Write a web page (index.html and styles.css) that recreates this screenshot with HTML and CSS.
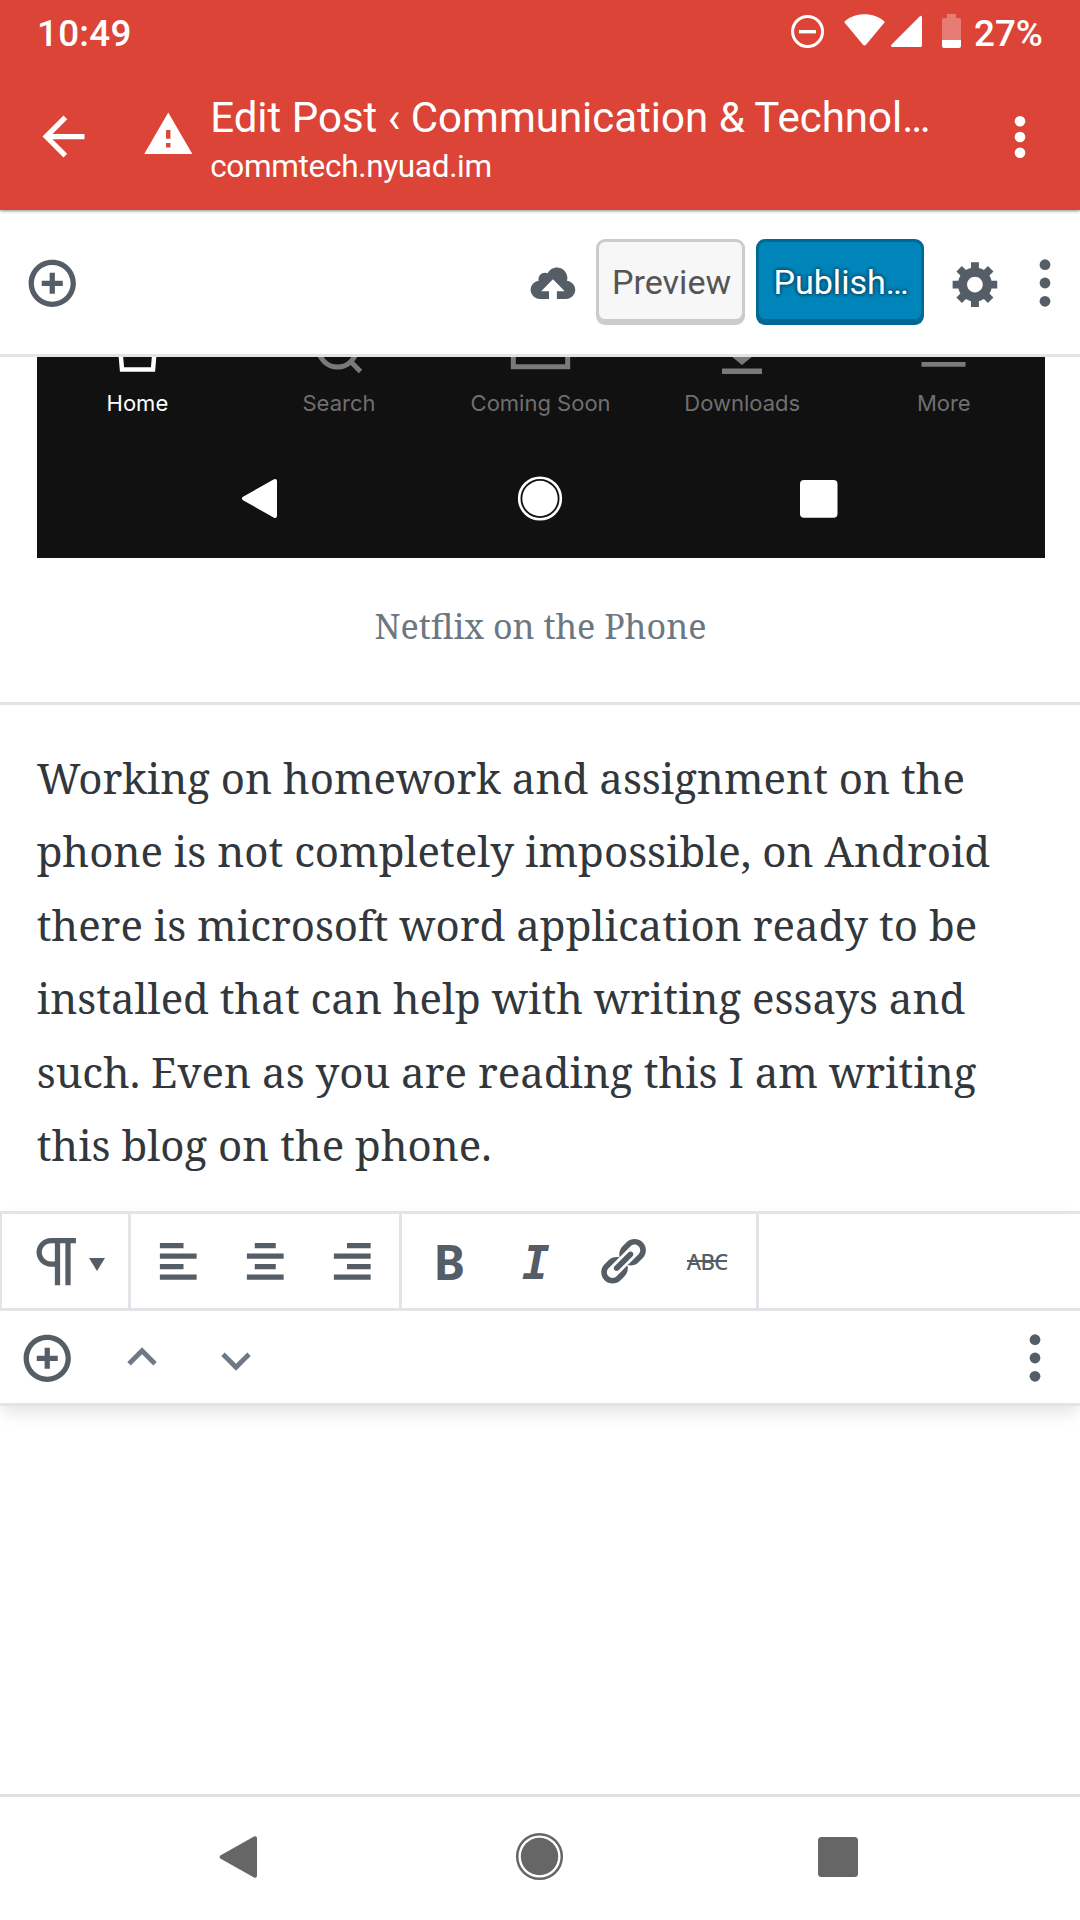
FILE: index.html
```html
<!DOCTYPE html>
<html lang="en">
<head>
<meta charset="utf-8">
<title>Edit Post ‹ Communication &amp; Technology</title>
<link rel="stylesheet" href="styles.css">
</head>
<body>
<div class="screen">
  <header class="chrome">
    <div class="status">
      <span class="status-text">10:49</span>
      <svg class="status-icons" width="176" height="63" viewBox="790 0 176 63">
        <circle cx="807.6" cy="31.5" r="15" fill="none" stroke="#fff" stroke-width="3"/>
        <path d="M799 30h17v3.400h-17z" fill="#fff"/>
        <path d="M864.5 14.3c-7.600 0-14.300 2.500-19.400 6.600-.7.6-.8 1.500-.2 2.200l18.100 21.700c.8 1 2.200 1 3 0l18.100-21.700c.6-.7.5-1.600-.2-2.200-5.100-4.100-11.800-6.600-19.400-6.600z" fill="#fff"/>
        <path d="M922 17.200v28.200q0 1.600-1.600 1.600h-28q-2.400-.6-.8-2.600l28-28q1.800-1.400 2.400.8z" fill="#fff"/>
        <path d="M947 14h9v4h3q2 0 2 2v20h-19V20q0-2 2-2h3z" fill="#fff" opacity=".3"/>
        <path d="M942 40h19v6q0 2-2 2h-15q-2 0-2-2z" fill="#fff"/>
      </svg>
      <span class="status-text">27%</span>
    </div>
    <div class="appbar">
      <svg class="back" width="63" height="63" viewBox="0 0 24 24"><path d="M20 11H7.830l5.590-5.590L12 4l-8 8 8 8 1.410-1.410L7.830 13H20z"/></svg>
      <svg class="warn" width="52.5" height="52.5" viewBox="0 0 24 24"><path d="M1 21h22L12 2 1 21zm12-3h-2v-2h2v2zm0-4h-2v-4h2v4z"/></svg>
      <div class="page">
        <div class="page-title">Edit Post ‹ Communication &amp; Technol…</div>
        <div class="page-host">commtech.nyuad.im</div>
      </div>
      <svg class="menu" width="12" height="44" viewBox="0 0 12 44"><circle cx="6" cy="6.250" r="5.300"/><circle cx="6" cy="22" r="5.300"/><circle cx="6" cy="37.750" r="5.300"/></svg>
    </div>
  </header>

  <nav class="editor-bar">
    <svg class="add" width="52.5" height="52.5" viewBox="0 0 20 20"><path d="M10 1c-5 0-9 4-9 9s4 9 9 9 9-4 9-9-4-9-9-9zm0 16c-3.900 0-7-3.100-7-7s3.100-7 7-7 7 3.100 7 7-3.100 7-7 7zm1-11H9v3H6v2h3v3h2v-3h3V9h-3V6z"/></svg>
    <svg class="cloud" width="52.5" height="52.5" viewBox="0 0 20 20"><path d="M14.800 9c.1-.3.2-.6.2-1 0-2.200-1.800-4-4-4-1.500 0-2.900.9-3.500 2.200-.3-.1-.7-.2-1-.2C5.100 6 4 7.100 4 8.500c0 .2 0 .4.1.5-1.800.3-3.100 1.700-3.100 3.500C1 14.400 2.600 16 4.500 16H8v-3H5l4.500-4.500L14 13h-3v3h3.500c1.900 0 3.500-1.600 3.500-3.500 0-1.800-1.400-3.300-3.200-3.500z"/></svg>
    <button class="btn preview">Preview</button>
    <button class="btn publish">Publish…</button>
    <svg class="gear" width="52.5" height="52.5" viewBox="0 0 20 20"><path d="M18 12h-2.180c-.17.7-.44 1.350-.81 1.930l1.540 1.540-2.100 2.100-1.540-1.540c-.58.36-1.230.63-1.910.79V19H8v-2.180c-.68-.16-1.330-.43-1.910-.79l-1.540 1.540-2.120-2.120 1.540-1.540c-.36-.58-.63-1.230-.79-1.910H1V9.030h2.170c.16-.7.44-1.350.8-1.940L2.430 5.550l2.100-2.100 1.540 1.540c.58-.37 1.240-.64 1.930-.81V2h3v2.180c.68.16 1.330.43 1.910.79l1.540-1.540 2.120 2.120-1.540 1.540c.36.59.64 1.240.8 1.940H18V12zm-8.500 1.500c1.660 0 3-1.340 3-3s-1.340-3-3-3-3 1.340-3 3 1.340 3 3 3z"/></svg>
    <svg class="more" width="12" height="50" viewBox="0 0 12 50"><circle cx="6" cy="6.700" r="5.400"/><circle cx="6" cy="25" r="5.400"/><circle cx="6" cy="43.300" r="5.400"/></svg>
  </nav>

  <figure class="figure">
    <div class="shot">
      <svg class="shot-icons" width="1008" height="30" viewBox="37 357 1008 30" fill="none">
        <path d="M120.500 352l1.500 17.500h31l1.500-17.500" stroke="#fff" stroke-width="4.500"/>
        <g stroke="#7a7a7a" stroke-width="5">
          <circle cx="337.500" cy="348" r="19"/>
          <path d="M350.500 361.500l10 10"/>
          <path d="M513.300 350v16.700h54.400V350"/>
        </g>
        <path d="M725 351l17 14 17-14zM722 368.500h40v5.500h-40zM921.500 362h44v4.700h-44z" fill="#7a7a7a"/>
      </svg>
      <div class="tabs">
        <span class="tab active">Home</span><span class="tab">Search</span><span class="tab">Coming Soon</span><span class="tab">Downloads</span><span class="tab">More</span>
      </div>
      <svg class="shot-nav" width="1008" height="140" viewBox="37 417 1008 140">
        <path d="M244 498.500l31-17.500v35z" fill="#fff" stroke="#fff" stroke-width="4" stroke-linejoin="round"/>
        <circle cx="540" cy="498.500" r="20.800" fill="none" stroke="#fff" stroke-width="2.600"/>
        <circle cx="540" cy="498.500" r="17.700" fill="#fff"/>
        <rect x="800" y="480" width="37.500" height="37.800" rx="4" fill="#fff"/>
      </svg>
    </div>
    <figcaption class="caption">Netflix on the Phone</figcaption>
  </figure>

  <p class="text">Working on homework and assignment on the<br>phone is not completely impossible, on Android<br>there is microsoft word application ready to be<br>installed that can help with writing essays and<br>such. Even as you are reading this I am writing<br>this blog on the phone.</p>

  <section class="block-tools">
    <div class="format-bar">
      <div class="group type">
        <svg width="63" height="63" viewBox="0 0 24 24"><path d="M11 5v7H9.500C7.600 12 6 10.400 6 8.500S7.600 5 9.500 5H11m8-2H9.500C6.500 3 4 5.500 4 8.500S6.500 14 9.500 14H11v7h2V5h2v16h2V5h2V3z"/></svg>
        <svg class="caret" width="16" height="13" viewBox="0 0 16 13"><path d="M0 0h16L8 13z"/></svg>
      </div>
      <div class="group align">
        <svg width="52.5" height="52.5" viewBox="0 0 20 20"><path d="M12 5V3H3v2h9zm5 4V7H3v2h14zm-5 4v-2H3v2h9zm5 4v-2H3v2h14z"/></svg>
        <svg width="52.5" height="52.5" viewBox="0 0 20 20"><path d="M14 5V3H6v2h8zm3 4V7H3v2h14zm-3 4v-2H6v2h8zm3 4v-2H3v2h14z"/></svg>
        <svg width="52.5" height="52.5" viewBox="0 0 20 20"><path d="M17 5V3H8v2h9zm0 4V7H3v2h14zm0 4v-2H8v2h9zm0 4v-2H3v2h14z"/></svg>
      </div>
      <div class="group inline">
        <span class="bold">B</span>
        <span class="italic">I</span>
        <svg width="52.5" height="52.5" viewBox="0 0 20 20"><path d="M17.740 2.760c1.680 1.690 1.680 4.410 0 6.100l-1.530 1.520c-1.120 1.120-2.700 1.470-4.140 1.090l2.620-2.610.76-.77.76-.76c.84-.84.84-2.200 0-3.040-.84-.85-2.200-.85-3.040 0l-.77.76-3.380 3.380c-.37-1.440-.02-3.020 1.100-4.140l1.520-1.530c1.690-1.680 4.420-1.680 6.100 0zM8.590 13.430l5.340-5.340c.42-.42.42-1.100 0-1.520-.44-.43-1.130-.39-1.530 0l-5.330 5.340c-.42.42-.42 1.100 0 1.520.44.43 1.130.39 1.520 0zm-.76 2.290l4.140-4.150c.38 1.440.03 3.020-1.090 4.140l-1.520 1.530c-1.690 1.680-4.410 1.680-6.100 0-1.680-1.680-1.680-4.420 0-6.100l1.530-1.520c1.120-1.120 2.700-1.470 4.140-1.100l-4.140 4.150c-.85.84-.85 2.200 0 3.050.84.84 2.200.84 3.040 0z"/></svg>
        <span class="strike">ABC</span>
      </div>
    </div>
    <div class="mover-bar">
      <svg class="add" width="52.5" height="52.5" viewBox="0 0 20 20"><path d="M10 1c-5 0-9 4-9 9s4 9 9 9 9-4 9-9-4-9-9-9zm0 16c-3.900 0-7-3.100-7-7s3.100-7 7-7 7 3.100 7 7-3.100 7-7 7zm1-11H9v3H6v2h3v3h2v-3h3V9h-3V6z"/></svg>
      <svg class="up" width="30" height="19" viewBox="0 0 30 19"><path d="M2 16.700l13-13 13 13"/></svg>
      <svg class="down" width="30" height="19" viewBox="0 0 30 19"><path d="M2 2.300l13 13 13-13"/></svg>
      <svg class="more" width="12" height="50" viewBox="0 0 12 50"><circle cx="6" cy="6.700" r="5.400"/><circle cx="6" cy="25" r="5.400"/><circle cx="6" cy="43.300" r="5.400"/></svg>
    </div>
  </section>

  <footer class="system-nav">
    <svg width="1080" height="123" viewBox="0 1797 1080 123" fill="#666">
      <path d="M221.700 1857l33.300-18.700v37.400z" stroke="#666" stroke-width="4" stroke-linejoin="round"/>
      <circle cx="539.500" cy="1856.500" r="22.300" fill="none" stroke="#666" stroke-width="2.500"/>
      <circle cx="539.500" cy="1856.500" r="18.700"/>
      <rect x="818" y="1837" width="40" height="40" rx="3.500"/>
    </svg>
  </footer>
</div>
</body>
</html>
```
FILE: styles.css
```css
* { box-sizing: border-box; }
body { margin: 0; background: #fff; }
svg { display: block; flex: none; }

.screen {
  display: flex;
  flex-direction: column;
  width: 1080px;
  height: 1920px;
  overflow: hidden;
  background: #fff;
  font-family: Roboto, sans-serif;
}

/* browser chrome */
.chrome {
  flex: none;
  height: 210px;
  background: #db4437;
  color: #fff;
  box-shadow: 0 1px 3px rgba(0, 0, 0, .45);
  z-index: 1;
}
.status { display: flex; height: 63px; padding-left: 37px; }
.status-text { padding-top: 4px; font-size: 36.75px; font-weight: 500; line-height: 59px; }
.status-text:first-child { letter-spacing: .3px; }
.status-icons { margin-left: auto; margin-right: 8px; }
.status-text:last-child { width: 106px; }
.appbar { display: flex; height: 147px; fill: #fff; }
.back { margin: 42px 0 0 31.5px; }
.warn { margin: 45px 0 0 47.2px; }
.page { padding: 31px 0 0 16px; white-space: nowrap; }
.page-title { font-size: 42px; line-height: 48px; }
.page-host { margin-top: 6px; font-size: 31.5px; line-height: 38px; letter-spacing: -.32px; }
.menu { margin: 51.5px 54.5px 0 auto; }

/* editor header */
.editor-bar {
  display: flex;
  flex: none;
  align-items: center;
  height: 147px;
  border-bottom: 3px solid #e2e4e7;
  fill: #555d66;
}
.editor-bar svg { margin-top: 3px; }
.editor-bar .add { margin-left: 26.2px; }
.editor-bar .cloud { margin-left: auto; margin-right: 16px; }
.btn {
  flex: none;
  height: 83px;
  margin: 0 0 3px;
  padding: 3px 0 0 2px;
  border: 3px solid #ccc;
  border-radius: 9px;
  font: 34.125px/1 Roboto, sans-serif;
}
.preview { width: 149px; background: #f7f7f7; color: #555; box-shadow: 0 3px 0 #ccc; }
.publish {
  width: 168px;
  margin-left: 11px;
  border-color: #006a95;
  background: #0085ba;
  color: #fff;
  box-shadow: 0 3px 0 #006a95;
  text-shadow: 0 -2px 3px #005d82, 2px 0 3px #005d82, 0 2px 3px #005d82, -2px 0 3px #005d82;
}
.editor-bar .gear { margin-left: 26.4px; }
.editor-bar .more { margin: 2px 29.4px 0 35.7px; }

/* image block */
.figure { flex: none; height: 348px; margin: 0; border-bottom: 3px solid #e2e4e7; }
.shot { width: 1008px; height: 200.5px; margin-left: 36.6px; overflow: hidden; background: #111; }
.tabs { display: grid; grid-template-columns: repeat(5, 1fr); padding-top: 1px; margin-bottom: -1px; font: 22px/30px Inter, sans-serif; color: #6f6f6f; text-align: center; }
.tab.active { color: #fff; }
.caption {
  padding: 38px 0 0 1px;
  color: #6c7781;
  font: 34.125px/61px "Noto Serif", serif;
  text-align: center;
}

/* paragraph block */
.text {
  flex: none;
  height: 506px;
  margin: 0;
  padding: 35.5px 0 0 36.7px;
  color: #32373c;
  font: 42px/73.5px "Noto Serif", serif;
  white-space: nowrap;
}

/* block toolbars */
.block-tools {
  flex: none;
  height: 195px;
  border: 3px solid #e2e4e7;
  border-width: 3px 0;
  color: #555d66;
  fill: currentColor;
  box-shadow: 0 8px 16px -2px rgba(25, 30, 35, .13);
}
.format-bar { display: flex; height: 97px; border-bottom: 3px solid #e2e4e7; border-left: 2px solid #e2e4e7; }
.group { display: flex; align-items: center; border-right: 3px solid #e2e4e7; }
.type { width: 129px; padding-left: 24.3px; }
.caret { margin: 7px 0 0; }
.align { width: 270.5px; gap: 34.3px; padding-left: 21.1px; }
.inline { width: 357px; }
.inline svg { margin-left: 45.700px; }
.bold { width: 31px; margin: 1px 0 0 32px; font: bold 47.500px/60px "Noto Sans", sans-serif; }
.italic { width: 28px; margin: 3px 0 0 57.500px; font: italic bold 46px/60px "DejaVu Sans Mono", monospace; }
.strike {
  width: 41px;
  margin: -1px 0 0 38.5px;
  background: linear-gradient(currentColor, currentColor) 0 50% / 40px 2px no-repeat;
  font: 500 22px/30px "Noto Sans", sans-serif;
  letter-spacing: -.6px;
}
.mover-bar { display: flex; align-items: center; height: 92px; }
.mover-bar .add { margin: 2px 0 0 21px; }
.up, .down { fill: none; stroke: #6f7984; stroke-width: 4.800; }
.up { margin: -1px 0 0 53px; }
.down { margin: 8px 0 0 64px; }
.mover-bar .more { margin: 2px 39.5px 0 auto; }

.system-nav { flex: none; height: 126px; margin-top: auto; border-top: 3px solid #e0e0e0; }
```
